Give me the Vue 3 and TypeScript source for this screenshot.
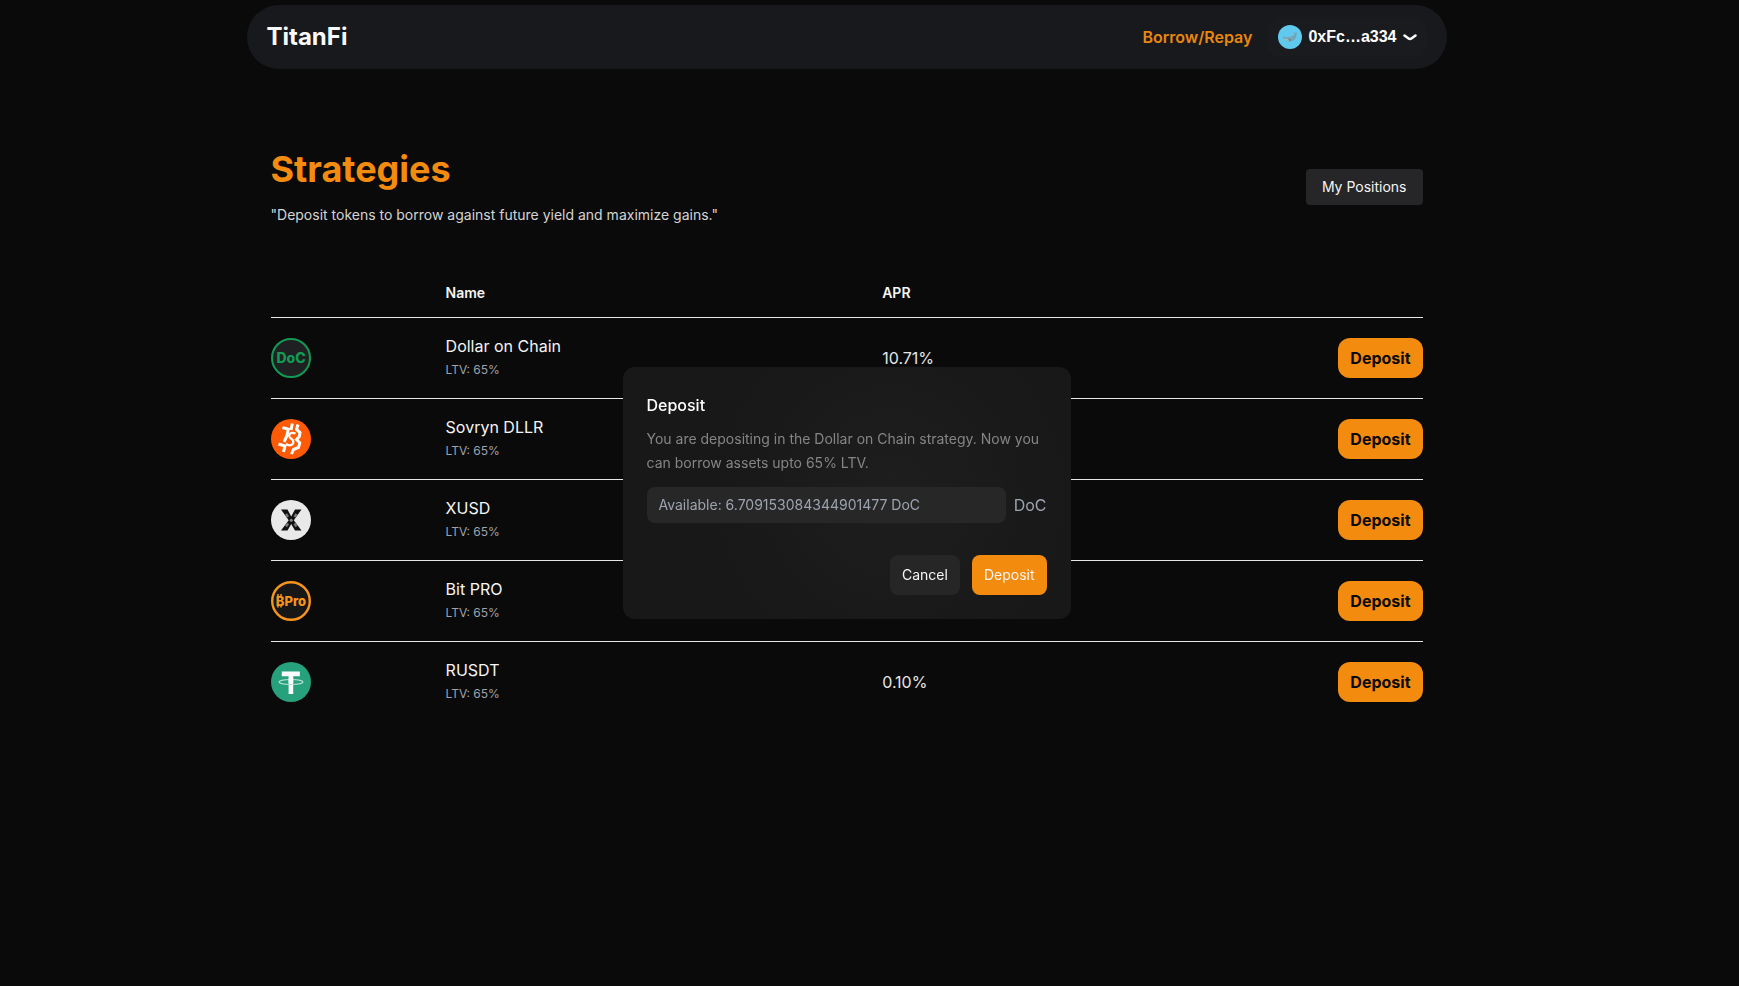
<script setup lang="ts">
import { ref } from 'vue'

interface Strategy {
  id: string
  name: string
  ltv: string
  apr?: string
}

const strategies: Strategy[] = [
  { id: 'doc', name: 'Dollar on Chain', ltv: '65%', apr: '10.71%' },
  { id: 'dllr', name: 'Sovryn DLLR', ltv: '65%' },
  { id: 'xusd', name: 'XUSD', ltv: '65%' },
  { id: 'bpro', name: 'Bit PRO', ltv: '65%' },
  { id: 'rusdt', name: 'RUSDT', ltv: '65%', apr: '0.10%' },
]

const open = ref(true)
const amount = ref('')
</script>

<template>
  <div class="page">
    <header class="nav">
      <a class="brand" href="#">TitanFi</a>
      <nav class="links">
        <a class="borrow" href="#">Borrow/Repay</a>
        <button class="account" type="button">
          <svg class="avatar" viewBox="0 0 24 24" aria-hidden="true">
            <circle cx="12" cy="12" r="12" fill="#5fc9ee" />
            <path d="M5 11c2 1.300 4.500 1.600 7 .8 2-.6 3.500-1 4.500-2.600l-.8-2.200 2 1.100 1.600-.9-.9 2.600c.2 3.500-2.400 6.600-6.300 6.500-3.800 0-6.600-2-7.100-5.300z" fill="#73a5b4" />
            <path d="M6 13.300c2 1 5 1 8 .1-1 1.800-3 2.700-5 2.300-1.500-.3-2.600-1.300-3-2.400z" fill="#a9b9b6" />
            <path d="M10 14l3.400 0-1.400 3z" fill="#5f8fa0" />
          </svg>
          <span>0xFc…a334</span>
          <svg class="chevron" viewBox="0 0 14 7" aria-hidden="true">
            <path d="M1.500 1.500L5.200 4.300a3 3 0 0 0 3.600 0L12.500 1.500" fill="none" stroke="#fff" stroke-width="2.500" stroke-linecap="round" />
          </svg>
        </button>
      </nav>
    </header>

    <main class="content">
      <section class="intro">
        <div>
          <h1>Strategies</h1>
          <p>"Deposit tokens to borrow against future yield and maximize gains."</p>
        </div>
        <button class="positions" type="button">My Positions</button>
      </section>

      <table>
        <colgroup>
          <col class="col-icon" />
          <col class="col-name" />
          <col class="col-apr" />
          <col />
        </colgroup>
        <thead>
          <tr>
            <th></th>
            <th scope="col">Name</th>
            <th scope="col">APR</th>
            <th></th>
          </tr>
        </thead>
        <tbody>
          <tr v-for="s in strategies" :key="s.id">
            <td>
              <svg class="token" viewBox="0 0 40 40" aria-hidden="true">
                <template v-if="s.id === 'doc'">
                  <circle cx="20" cy="20" r="19" fill="#1f2021" stroke="#129a55" stroke-width="2" />
                  <text class="doc-text" x="20" y="25">DoC</text>
                </template>
                <template v-else-if="s.id === 'dllr'">
                  <circle cx="20" cy="20" r="20" fill="#ff5a05" />
                  <g fill="none" stroke="#fff" stroke-width="3">
                    <path d="M11.500 8.500L17.300 10.300 15.800 17 13 23" />
                    <path d="M21.300 4.500L20 11" />
                    <path d="M27 5.500L25.500 10.500 29 13.500 28.300 17.500 25.500 20.500 28.800 24 27.500 28.500 22.500 30.500 20.500 35" />
                    <path d="M7.500 25L14 27 12.500 33" />
                    <path d="M24.500 14.500C20 12.500 16.500 15.500 19 18.500L22 21.500C23.500 25 19.500 28 15 25" stroke-width="2.200" />
                  </g>
                </template>
                <template v-else-if="s.id === 'xusd'">
                  <circle cx="20" cy="20" r="20" fill="#e9e9ea" />
                  <path d="M10 9.500h6.500L20.200 16.500 24 9.500h6.500L22.800 20.200 30.500 30.500H24L20.200 24 16.500 30.500H10L17.700 20.200z" fill="#111" />
                  <path d="M15 14l2 3M25.500 14l-2 3M17 23.500l-2 3M23.500 23.500l2 3" stroke="#777" stroke-width="2.500" />
                  <circle cx="20.200" cy="20.200" r="1.500" fill="#888" />
                </template>
                <template v-else-if="s.id === 'bpro'">
                  <circle cx="20" cy="20" r="18.800" fill="#171717" stroke="#f7941d" stroke-width="2.400" />
                  <text class="bpro-text" x="20" y="24.500">BPro</text>
                  <path d="M7 13v3M10 13v3M7 24v2.500M10 24v2.500" stroke="#f7941d" stroke-width="1.500" />
                </template>
                <template v-else>
                  <circle cx="20" cy="20" r="20" fill="#26a17b" />
                  <path d="M10.800 9.500h18v4.800h-6.600V32h-4.600V14.300h-6.800z" fill="#fff" />
                  <ellipse cx="20" cy="20" rx="12" ry="2.500" fill="none" stroke="#b9e2d5" stroke-width="1.100" />
                  <path d="M17.600 16h4.600v5h-4.600z" fill="#fff" />
                </template>
              </svg>
            </td>
            <td>
              <div class="name">{{ s.name }}</div>
              <div class="ltv">LTV: {{ s.ltv }}</div>
            </td>
            <td class="apr">{{ s.apr }}</td>
            <td class="action">
              <button class="deposit" type="button" @click="open = true">Deposit</button>
            </td>
          </tr>
        </tbody>
      </table>
    </main>

    <div v-if="open" class="overlay">
      <form class="modal" role="dialog" aria-labelledby="dialog-title" @submit.prevent>
        <h2 id="dialog-title">Deposit</h2>
        <p>You are depositing in the Dollar on Chain strategy. Now you can borrow assets upto 65% LTV.</p>
        <div class="field">
          <input id="amount" v-model="amount" type="text" placeholder="Available: 6.709153084344901477 DoC" />
          <label for="amount">DoC</label>
        </div>
        <div class="buttons">
          <button class="cancel" type="button" @click="open = false">Cancel</button>
          <button class="confirm" type="submit">Deposit</button>
        </div>
      </form>
    </div>
  </div>
</template>

<style>
body {
  margin: 0;
  background: #0a0a0a;
}
</style>

<style scoped>
* {
  box-sizing: border-box;
}

.page {
  min-height: 100vh;
  padding: 5px 46px 0 0;
  background: #0a0a0a;
  color: #f5f5f5;
  font-family: Inter, "Liberation Sans", sans-serif;
  font-size: 16px;
  line-height: 24px;
}

button,
input {
  font: inherit;
  border: 0;
  margin: 0;
}

button {
  cursor: pointer;
}

a {
  text-decoration: none;
}

h1,
h2,
p {
  margin: 0;
}

.nav {
  display: flex;
  align-items: center;
  justify-content: space-between;
  max-width: 1200px;
  height: 64px;
  margin: 0 auto;
  padding: 0 20px;
  border-radius: 32px;
  background: #18191c;
}

.brand {
  color: #f8fafc;
  font-size: 24px;
  font-weight: 700;
  line-height: 32px;
}

.links {
  display: flex;
  align-items: center;
  gap: 16px;
}

.borrow {
  color: #e8870f;
  font-weight: 600;
}

.account {
  display: flex;
  align-items: center;
  gap: 6px;
  height: 40px;
  padding: 0 10px;
  border-radius: 12px;
  background: #1a1b1f;
  color: #fff;
  font-family: "Liberation Sans", Arial, sans-serif;
  font-weight: 700;
}

.avatar {
  width: 24px;
  height: 24px;
}

.chevron {
  width: 14px;
  height: 7px;
}

.content {
  max-width: 1200px;
  margin: 0 auto;
  padding: 80px 24px 0;
}

.intro {
  display: flex;
  align-items: center;
  justify-content: space-between;
}

h1 {
  color: #f38b0f;
  font-size: 36px;
  font-weight: 700;
  line-height: 40px;
}

.intro p {
  margin-top: 16px;
  color: #d4d4d4;
  font-size: 14px;
  line-height: 20px;
}

.positions {
  height: 36px;
  padding: 0 16px;
  border-radius: 4px;
  background: #262628;
  color: #f5f5f5;
  font-size: 14px;
}

table {
  width: 100%;
  margin-top: 44px;
  border-collapse: separate;
  border-spacing: 0;
  table-layout: fixed;
}

.col-icon {
  width: 15.2%;
}

.col-name {
  width: 37.9%;
}

.col-apr {
  width: 25%;
}

th,
td {
  padding: 0;
  text-align: left;
}

th {
  height: 49px;
  font-size: 14px;
  font-weight: 600;
}

td {
  height: 81px;
}

tbody tr:last-child td {
  height: 80px;
}

th,
tbody tr:not(:last-child) td {
  border-bottom: 1px solid #e5e7eb;
}

.token {
  display: block;
  width: 40px;
  height: 40px;
}

.doc-text,
.bpro-text {
  font-family: Inter, sans-serif;
  font-weight: 800;
  text-anchor: middle;
}

.doc-text {
  fill: #129a55;
  font-size: 14px;
}

.bpro-text {
  fill: #f7941d;
  font-size: 13px;
}

.ltv {
  color: #9ca3af;
  font-size: 12px;
}

.apr {
  color: #e5e5e5;
}

td.action {
  text-align: right;
}

.deposit {
  height: 40px;
  padding: 0 12px;
  border-radius: 12px;
  background: #f38b0f;
  color: #0a0a0a;
  font-weight: 700;
  vertical-align: middle;
}

.overlay {
  position: fixed;
  inset: 0 46px 0 0;
  display: flex;
  align-items: center;
  justify-content: center;
}

.modal {
  width: 448px;
  padding: 24px;
  border-radius: 12px;
  background: radial-gradient(circle at 60% 50%, #1e1e1e, #181818 60%);
}

h2 {
  color: #fff;
  font-size: 16px;
  font-weight: 500;
  line-height: 28px;
}

.modal p {
  margin-top: 8px;
  color: #858585;
  font-size: 14px;
}

.field {
  display: flex;
  align-items: center;
  gap: 8px;
  margin-top: 12px;
}

.field input {
  flex: 1;
  min-width: 0;
  height: 36px;
  padding: 0 12px 2px;
  border-radius: 8px;
  background: #272727;
  color: #f5f5f5;
  font-size: 14px;
}

.field input::placeholder {
  color: #9ca3af;
  opacity: 1;
}

.field label {
  color: #9ca3af;
}

.buttons {
  display: flex;
  justify-content: flex-end;
  gap: 12px;
  margin-top: 32px;
}

.buttons button {
  height: 40px;
  padding: 0 12px;
  border-radius: 8px;
  color: #f5f5f5;
  font-size: 14px;
}

.cancel {
  background: #262626;
}

.buttons .confirm {
  background: #f38b0f;
}
</style>
